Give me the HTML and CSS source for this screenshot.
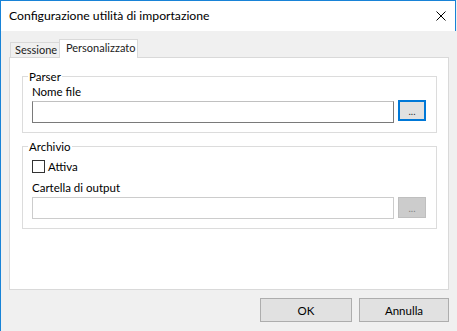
FILE: index.html
```html
<!DOCTYPE html>
<html lang="it">
<head>
    <meta charset="UTF-8">
    <meta name="viewport" content="width=device-width, initial-scale=1.0">
    <title>Configurazione utilità di importazione</title>
    <link rel="stylesheet" href="styles.css">
</head>
<body>
    <div class="finestra">
        <div class="titolo">
            <span class="titolo-testo">Configurazione utilità di importazione</span>
            <svg class="chiudi" width="10" height="10" viewBox="0 0 10 10">
                <path d="M0.5 0.5 L9.5 9.5 M9.5 0.5 L0.5 9.5" stroke="#000" stroke-width="1" fill="none"/>
            </svg>
        </div>

        <div class="corpo">
            <div class="schede">
                <div class="scheda">Sessione</div>
                <div class="scheda attiva">Personalizzato</div>
            </div>

            <div class="pannello">
                <fieldset class="gruppo">
                    <legend>Parser</legend>
                    <label class="etichetta">Nome file</label>
                    <div class="riga">
                        <input type="text" class="campo">
                        <button class="sfoglia focus">...</button>
                    </div>
                </fieldset>

                <fieldset class="gruppo secondo">
                    <legend>Archivio</legend>
                    <label class="spunta"><span class="casella"></span>Attiva</label>
                    <label class="etichetta">Cartella di output</label>
                    <div class="riga">
                        <input type="text" class="campo" disabled>
                        <button class="sfoglia" disabled>...</button>
                    </div>
                </fieldset>
            </div>

            <div class="pulsanti">
                <button class="pulsante ok">OK</button>
                <button class="pulsante annulla">Annulla</button>
            </div>
        </div>
    </div>
</body>
</html>
```

FILE: styles.css
```css
body {
    margin: 0;
    font-family: Lato, "Noto Sans", sans-serif;
    font-size: 11.5px;
    color: #000;
    background-color: #f0f0f0;
}

.finestra {
    width: 455px;
    height: 330px;
    border-left: 1px solid #1883d7;
    border-top: 1px solid #1883d7;
    background-color: #f0f0f0;
}

.titolo {
    height: 30px;
    background-color: #fff;
    border-right: 1px solid #1883d7;
    display: flex;
    align-items: center;
    padding-left: 8px;
    padding-right: 9px;
}

.titolo-testo {
    flex: 1;
    font-size: 12.2px;
    margin-top: -1px;
}

.chiudi {
    margin-top: -1px;
}

.corpo {
    padding: 8px 7px 0 8px;
}

.schede {
    display: flex;
    align-items: flex-end;
    height: 18px;
    padding-left: 1px;
    position: relative;
    z-index: 1;
}

.scheda {
    height: 15px;
    line-height: 14px;
    padding: 0 0 0 4px;
    border: 1px solid #d9d9d9;
    border-bottom: none;
    background-color: #f0f0f0;
    box-sizing: border-box;
    width: 50px;
    color: #222;
    font-size: 11px;
}

.scheda.attiva {
    height: 19px;
    line-height: 16px;
    width: 79px;
    margin-left: -1px;
    margin-bottom: -1px;
    background-color: #fff;
    padding: 0 0 0 6px;
}

.pannello {
    background-color: #fff;
    border: 1px solid #d9d9d9;
    padding: 12px 11px 0 12px;
    box-sizing: border-box;
    width: 440px;
    height: 233px;
}

.gruppo {
    margin: 0;
    border: 1px solid #dcdcdc;
    padding: 0 9px 9px 9px;
}

.gruppo legend {
    padding: 0 1px;
    margin-left: -4px;
    line-height: 13px;
}

.gruppo.secondo {
    margin-top: 7px;
    padding-bottom: 9px;
}

.etichetta {
    display: block;
    line-height: 13px;
    margin-top: 2px;
    margin-bottom: 3px;
}

.riga {
    display: flex;
    align-items: flex-start;
    gap: 4px;
}

.campo {
    width: 362px;
    height: 22px;
    box-sizing: border-box;
    margin: 0;
    border: 1px solid #7a7a7a;
    border-top-color: #c0c0c0;
    background-color: #fff;
    font: inherit;
}

.campo:disabled {
    border-color: #cccccc;
    background-color: #fff;
}

.sfoglia {
    width: 28px;
    height: 21px;
    margin: 0;
    margin-top: -1px;
    padding: 0;
    font: inherit;
    font-size: 10px;
    line-height: 8px;
    background-color: #e1e1e1;
    border: 1px solid #adadad;
    color: #333;
}

.sfoglia.focus {
    border: 2px solid #0078d7;
}

.sfoglia:disabled {
    background-color: #cccccc;
    border-color: #bfbfbf;
    color: #838383;
    margin-top: 0;
}

.spunta {
    display: flex;
    align-items: center;
    height: 13px;
    margin-top: 7px;
    margin-bottom: 8px;
}

.casella {
    width: 13px;
    height: 13px;
    box-sizing: border-box;
    border: 1px solid #333;
    background-color: #fff;
    margin-right: 3px;
}

.pulsanti {
    display: flex;
    justify-content: flex-end;
    gap: 7px;
    margin-top: 8px;
}

.pulsante {
    height: 24px;
    margin: 0;
    padding: 0;
    font: inherit;
    background-color: #e1e1e1;
    border: 1px solid #adadad;
    color: #000;
}

.ok {
    width: 92px;
}

.annulla {
    width: 90px;
}
```
